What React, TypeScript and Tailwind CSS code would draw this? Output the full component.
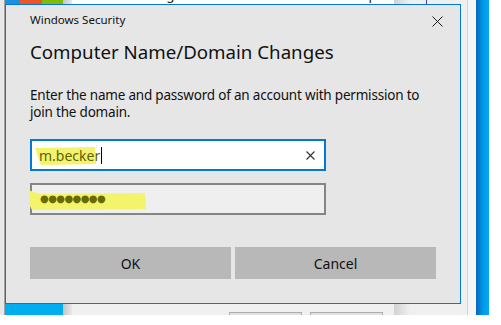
import React from 'react';

const font = { fontFamily: '"Noto Sans", "Open Sans", sans-serif' };

const Desktop: React.FC = () => (
  <div className="flex h-[315px] w-[489px]">
    <div className="w-[4px] bg-[#e8e8e8]" />
    <div className="w-[1px] bg-[#a3a3a3]" />
    {/* start tiles */}
    <div className="flex w-[58px] flex-col">
      <div className="flex h-[4px]">
        <div className="w-[15px] bg-[#1d8fe0]" />
        <div className="w-[22px] bg-[#f25325]" />
        <div className="w-[21px] bg-[#80bb06]" />
      </div>
      <div className="flex-1 bg-[#00adef]" />
    </div>
    <div className="w-[9px] bg-gradient-to-r from-[#c6c6c6] to-[#e8e8e8]" />
    {/* window behind */}
    <div className="flex w-[322px] flex-col">
      <div className="relative flex-1 overflow-hidden bg-white">
        <div className="mt-[-14px] whitespace-nowrap pl-[13px] text-[13.5px] leading-[17px] tracking-[-0.2px] text-[#222]">
          You can change the name and the membership of this
        </div>
      </div>
      <div className="h-[11px] bg-[#f0f0f0] pt-[8px]">
        <div className="flex gap-[8px] pl-[157px]">
          <div className="h-[10px] w-[73px] border border-[#adadad] bg-[#e1e1e1]" />
          <div className="h-[10px] w-[73px] border border-[#adadad] bg-[#e1e1e1]" />
        </div>
      </div>
    </div>
    <div className="w-[16px] bg-gradient-to-r from-[#d2d2d2] to-[#f0f0f0]" />
    <div className="w-[57px] bg-[#f0f0f0]">
      <div className="ml-[16px] h-[4px] w-[1px] bg-[#3b4a9a]" />
    </div>
    <div className="w-[1px] bg-[#d4d4d4]" />
    <div className="w-[8px] bg-[#f6f6f6]" />
    <div className="w-[13px] bg-gradient-to-r from-[#0a66bd] via-[#0096e6] to-[#00aaf0]" />
  </div>
);

const Dialog: React.FC = () => (
  <div className="absolute left-[5px] top-[4px] flex h-[300px] w-[456px] flex-col border border-[#0078d7] bg-[#e6e6e6] px-[24px] pt-[7px] text-black">
    {/* title bar */}
    <div className="flex h-[16px] items-center justify-between">
      <span className="text-[11.5px] leading-[16px] text-[#111]">Windows Security</span>
      <svg width="11" height="11" viewBox="0 0 11 11" className="mr-[-7px] mt-[3px]">
        <path d="M0.5 0.5 L10.5 10.5 M10.5 0.5 L0.5 10.5" stroke="#1a1a1a" strokeWidth="1" />
      </svg>
    </div>
    <h1 className="mt-[11px] whitespace-nowrap text-[18.7px] font-normal leading-[26px] text-[#111]">
      Computer Name/Domain Changes
    </h1>
    <p className="mt-[22px] whitespace-nowrap text-[13.5px] leading-[17px] tracking-[-0.2px] text-[#111]">
      Enter the name and password of an account with permission to
      <br />
      join the domain.
    </p>

    {/* user name */}
    <div className="relative mt-[18px] flex h-[32px] w-[296px] items-center border-2 border-[#0078d7] bg-white">
      <svg className="absolute left-[1px] top-[5px]" width="64" height="20" viewBox="0 0 64 20">
        <path d="M2 2 L62 1 L63 18 L8 19 Q5 12 2 2 Z" fill="#f4f46c" />
      </svg>
      <span className="relative pl-[7px] text-[14px] leading-[17px] text-[#5f5f08]">m.becker</span>
      <span className="relative ml-[1px] h-[17px] w-[1px] bg-black" />
      <svg className="ml-auto mr-[9px]" width="9" height="9" viewBox="0 0 9 9">
        <path d="M0.5 0.5 L8.5 8.5 M8.5 0.5 L0.5 8.5" stroke="#333" strokeWidth="1.1" />
      </svg>
    </div>

    {/* password */}
    <div className="relative mt-[12px] flex h-[32px] w-[296px] items-center border-2 border-[#858585] bg-[#efefef]">
      <span
        className="relative z-10 pl-[8px] text-[10px] leading-[12px] tracking-[-0.6px] text-[#6a6a00]"
        style={{ fontFamily: '"DejaVu Sans", sans-serif' }}
      >
        ●●●●●●●●
      </span>
    </div>

    <div className="mt-[32px] flex gap-[4px]">
      <button className="h-[32px] flex-1 bg-[#b8b8b8] text-[14px] text-[#111]">OK</button>
      <button className="h-[32px] flex-1 bg-[#b8b8b8] text-[14px] text-[#111]">Cancel</button>
    </div>
  </div>
);

export default function App() {
  return (
    <div className="h-[325px] w-[501px] bg-white" style={font}>
      <div className="relative h-[315px] w-[489px] overflow-hidden">
        <Desktop />
        <Dialog />
        {/* highlighter stroke over the password field */}
        <svg className="pointer-events-none absolute left-[26px] top-[188px]" width="122" height="24" viewBox="0 0 122 24">
          <path d="M2 2 Q8 4 14 6 L119 5 L120 21 L6 22 Q1 14 4 8 Q3 5 2 2 Z" fill="#f4f46c" />
        </svg>
      </div>
    </div>
  );
}
